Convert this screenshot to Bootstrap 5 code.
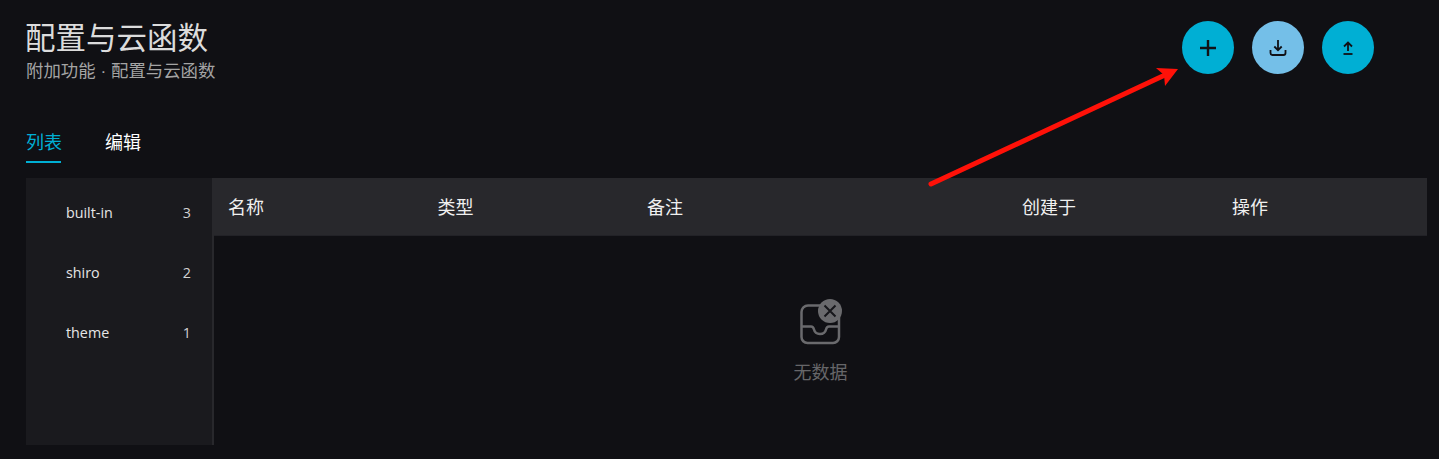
<!DOCTYPE html>
<html lang="zh-CN">
<head>
    <meta charset="UTF-8">
    <title>配置与云函数</title>
    <link rel="stylesheet" href="https://cdn.jsdelivr.net/npm/bootstrap@5.3.0/dist/css/bootstrap.min.css">
    <style>
        html, body { height: 459px; overflow: hidden; }
        body { background: #101014; color: #e6e6e6; font-family: "Liberation Sans", "Noto Sans CJK SC", sans-serif; position: relative; }
        .page-wrap { padding: 19px 12px 0 26px; }
        .head-row { height: 67px; }
        .page-title { font-size: 30.5px; line-height: 38px; font-weight: 400; color: #dcdcdc; margin: 0 0 0 -1px; }
        .page-sub { font-size: 17.4px; line-height: 24px; color: #a4a4a4; margin-top: 2px; }
        .head-actions { gap: 18px; padding: 2px 53px 0 0; }
        .round-btn { width: 52px; height: 53px; border: 0; border-radius: 50%; background: #00afd4; padding: 0; color: #111116; }
        .round-btn.light-btn { background: #74bfe8; }
        .tab-row { gap: 44px; margin-top: 36px; height: 41px; }
        .tab-item { font-size: 18px; line-height: 24px; padding-top: 9px; height: 41px; color: #fff; }
        .tab-item.on { color: #00afd4; border-bottom: 2px solid #00afd4; width: 35px; white-space: nowrap; }
        .tab-body { height: 267px; margin-top: 15px; }
        .side-list { width: 188px; background: #1a1a1e; border-right: 2px solid #28282c; padding: 5px 21px 0 40px; font-family: "Open Sans", sans-serif; }
        .side-row { height: 60px; font-size: 14.3px; color: #e6e6e6; }
        .side-num { color: #d2d2d2; }
        .tbl-head { height: 58px; background: #28282c; font-size: 18px; color: #f0f0f0; border-bottom: 1px solid #222227; padding-top: 4px; }
        .tbl-head > div { padding-left: 14px; }
        .c-name, .c-type { width: 209.5px; }
        .c-note { width: 375px; }
        .c-date { width: 210px; }
        .empty-box { padding-top: 63px; color: #666669; font-size: 18px; line-height: 24px; }
        .empty-box svg { display: block; margin-bottom: 16px; }
        .arrow-over { position: absolute; left: 0; top: 0; pointer-events: none; }
    </style>
</head>
<body>
    <div class="page-wrap">
        <div class="head-row d-flex justify-content-between">
            <div>
                <h1 class="page-title">配置与云函数</h1>
                <div class="page-sub">附加功能 · 配置与云函数</div>
            </div>
            <div class="head-actions d-flex align-items-start">
                <button class="round-btn d-flex align-items-center justify-content-center" type="button">
                    <svg width="16" height="16" viewBox="0 0 16 16"><path d="M8 0v16M0 8h16" stroke="currentColor" stroke-width="2.400" fill="none"/></svg>
                </button>
                <button class="round-btn light-btn d-flex align-items-center justify-content-center" type="button">
                    <svg width="18" height="18" viewBox="0 0 18 18" fill="none" stroke="currentColor" stroke-width="1.800"><path d="M9 1v10M5.300 7.500 9 11.200l3.700-3.700"/><path d="M1.500 11v3a2 2 0 0 0 2 2h11a2 2 0 0 0 2-2v-3"/></svg>
                </button>
                <button class="round-btn d-flex align-items-center justify-content-center" type="button">
                    <svg width="12" height="14" viewBox="0 0 12 14" fill="none" stroke="currentColor" stroke-width="1.800"><path d="M6 10V1.500M2 5.500 6 1.500l4 4"/><path d="M1.500 13h9"/></svg>
                </button>
            </div>
        </div>

        <div class="tab-row d-flex">
            <div class="tab-item on">列表</div>
            <div class="tab-item">编辑</div>
        </div>

        <div class="tab-body d-flex">
            <div class="side-list flex-shrink-0">
                <div class="side-row d-flex justify-content-between align-items-center"><span>built-in</span><span class="side-num">3</span></div>
                <div class="side-row d-flex justify-content-between align-items-center"><span>shiro</span><span class="side-num">2</span></div>
                <div class="side-row d-flex justify-content-between align-items-center"><span>theme</span><span class="side-num">1</span></div>
            </div>
            <div class="flex-grow-1">
                <div class="tbl-head d-flex align-items-center">
                    <div class="c-name">名称</div>
                    <div class="c-type">类型</div>
                    <div class="c-note">备注</div>
                    <div class="c-date">创建于</div>
                    <div>操作</div>
                </div>
                <div class="empty-box d-flex flex-column align-items-center">
                    <svg width="42" height="46" viewBox="0 0 42 46" fill="none">
                        <path d="M22 6.500H8a6.500 6.500 0 0 0-6.500 6.500V38a6 6 0 0 0 6 6h25.500a6 6 0 0 0 6-6V18" stroke="#6a6a6d" stroke-width="2.500"/>
                        <path d="M1.500 27.500H11c2 0 2.500 1 3 3 .7 3 3.500 4.500 6 4.500s5.300-1.500 6-4.500c.5-2 1-3 3-3h10.500" stroke="#6a6a6d" stroke-width="2.500"/>
                        <circle cx="30" cy="12" r="12" fill="#6a6a6d"/>
                        <path d="M24.500 6.500l11 11M35.500 6.500l-11 11" stroke="#17171b" stroke-width="2"/>
                    </svg>
                    <div>无数据</div>
                </div>
            </div>
        </div>
    </div>

    <svg class="arrow-over" width="1439" height="459" viewBox="0 0 1439 459">
        <path d="M931 184 1165 75" stroke="#ff1108" stroke-width="5" stroke-linecap="round" fill="none"/>
        <path d="M1178 69 1156 68 1164 75 1165 86Z" fill="#ff1108"/>
    </svg>
</body>
</html>
